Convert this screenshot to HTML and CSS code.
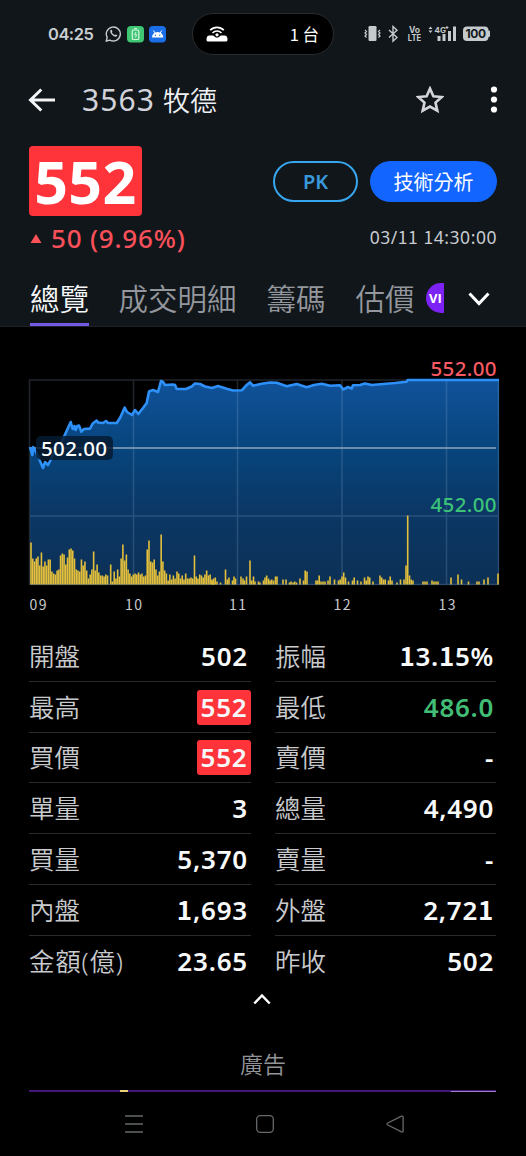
FILE: index.html
```html
<!DOCTYPE html>
<html lang="zh-Hant">
<head>
<meta charset="utf-8">
<title>3563 牧德</title>
<link rel="stylesheet" href="styles.css">
</head>
<body>
<div class="screen">
  <header class="top">
    <div class="status">
      <span class="clock">04:25</span>
      <svg class="notifs" width="62" height="18" viewBox="0 0 62 18">
        <path d="M1.2 16.2l1-3.8a7 7 0 1 1 2.7 2.7z" fill="none" stroke="#c9cdd0" stroke-width="1.4" stroke-linejoin="round"/>
        <path d="M5.7 5c.8-.6 1.2-.3 1.6 1 .3.8-.5.9-.3 1.5.6 1.3 1.400 2 2.700 2.600.6.200.8-.9 1.400-.7 1.300.6 1.500.8.9 1.700-1 1.300-3.400.4-5-1.300C5.400 8.200 4.600 6.200 5.700 5z" fill="#c9cdd0"/>
        <rect x="22" y="1" width="17" height="16.500" rx="4" fill="#3fc774"/>
        <rect x="27.300" y="5" width="6.500" height="9.500" rx="1" fill="none" stroke="#d8f6e3" stroke-width="1.200"/>
        <path d="M29 3.600h3M31 7l-1.500 2.800h2.200L30.300 12.500" fill="none" stroke="#d8f6e3"/>
        <rect x="44" y="1" width="17" height="16.500" rx="4" fill="#1a6fe8"/>
        <path d="M47 12.500a5.600 5.600 0 0 1 11.200 0z" fill="#fff"/>
        <path d="M48.500 5.500l1.500 2.500M56.700 5.500L55.200 8" stroke="#fff"/>
        <circle cx="50.400" cy="10.300" r=".7" fill="#1a6fe8"/><circle cx="54.800" cy="10.300" r=".7" fill="#1a6fe8"/>
      </svg>
      <div class="island">
        <svg width="22" height="18" viewBox="0 0 22 18">
          <path d="M4.200 5.200a9.500 9.500 0 0 1 13.600 0" fill="none" stroke="#fff" stroke-width="1.700"/>
          <path d="M6.500 8a6.200 6.200 0 0 1 9 0" fill="none" stroke="#fff" stroke-width="1.500"/>
          <circle cx="11" cy="9.800" r="1.600" fill="#fff"/>
          <path d="M.5 14.500C.5 12 1.500 10.500 3.500 10.500h3.300c1.200 0 1.700 2.200 4.200 2.200s3-2.200 4.200-2.200h3.300c2 0 3 1.500 3 4 0 1.500-.5 2-2 2h-17c-1.500 0-2-.5-2-2z" fill="#fff"/>
        </svg>
        <span>1 台</span>
      </div>
      <svg class="system" width="127" height="18" viewBox="0 0 127 18">
        <g fill="#c5cacd">
          <rect x="4.500" y="1" width="8" height="15" rx="1.200"/>
          <path d="M1 5l1.500 1.500L1 8l1.500 1.500L1 11l1.500 1.500M16 5l-1.500 1.500L16 8l-1.500 1.500L16 11l-1.500 1.500" fill="none" stroke="#c5cacd" stroke-width="1.200"/>
          <path d="M25 5l8 7.500-4 3.700V1.500l4 3.700-8 7.300" fill="none" stroke="#c5cacd" stroke-width="1.400"/>
          <text x="50.500" y="7.500" class="tiny" text-anchor="middle">Vo</text>
          <text x="50.500" y="16" class="tiny" text-anchor="middle" textLength="13.500" lengthAdjust="spacingAndGlyphs">LTE</text>
          <path d="M64.500 4l2-2.500 2 2.500zM64.500 5.500h4l-2 2.500z"/>
          <text x="70.500" y="7.500" class="four">4G</text>
          <path d="M83 1v3M81.500 2.500h3" stroke="#c5cacd"/>
          <path d="M73.500 11h3v5h-3zM78.500 9h3v7h-3zM84 6h3v10h-3zM89 1.500h3V16h-3z"/>
          <rect x="99" y="1.500" width="25.500" height="14.500" rx="4"/>
          <rect x="123.500" y="5.500" width="2.500" height="6.500" rx="1"/>
        </g>
        <text x="111.800" y="13.200" class="battery" text-anchor="middle" textLength="20.500">100</text>
      </svg>
    </div>

    <div class="titlebar">
      <svg width="28" height="24" viewBox="0 0 28 24"><path d="M27 12H3M13.300 1.500L2.500 12l10.800 10.500" fill="none" stroke="#f2f4f6" stroke-width="3"/></svg>
      <h1><span class="code">3563</span><span class="name">牧德</span></h1>
      <svg class="star" width="28" height="28" viewBox="0 0 28 28"><path d="M14 2.600l3.400 7.600 8.300.8-6.200 5.600 1.800 8.100L14 20.500l-7.300 4.200 1.800-8.100L2.300 11l8.300-.8z" fill="none" stroke="#d5d6da" stroke-width="2.600"/></svg>
      <svg class="more" width="8" height="28" viewBox="0 0 8 28" fill="#fff"><circle cx="4" cy="3.500" r="3.100"/><circle cx="4" cy="13.500" r="3.100"/><circle cx="4" cy="23.500" r="3.100"/></svg>
    </div>

    <div class="quote">
      <div class="price">552</div>
      <div class="actions"><span class="pk">PK</span><span class="ta">技術分析</span></div>
    </div>
    <div class="change">
      <svg width="12" height="10" viewBox="0 0 12 10"><path d="M6 1l5.500 9H.5z" fill="#fa5057"/></svg>
      <span class="delta">50 (9.96%)</span>
      <span class="time">03/<i>1</i><i>1</i> <i>1</i>4:30:00</span>
    </div>

    <nav class="tabs">
      <span class="tab active">總覽</span>
      <span class="tab">成交明細</span>
      <span class="tab">籌碼</span>
      <span class="tab">估價</span>
      <span class="vip">VI</span>
      <svg width="22" height="16" viewBox="0 0 22 16"><path d="M1.500 2.500L11 12.500l9.500-10" fill="none" stroke="#fff" stroke-width="3"/></svg>
    </nav>
  </header>

  <main>
    <svg class="chart" width="526" height="303" viewBox="0 327 526 303">
      <defs>
        <linearGradient id="area" x1="0" y1="380" x2="0" y2="585" gradientUnits="userSpaceOnUse">
          <stop offset="0" stop-color="#10529a"/><stop offset=".35" stop-color="#07447b"/><stop offset=".65" stop-color="#0b3765"/><stop offset="1" stop-color="#0c3055"/>
        </linearGradient>
      </defs>
      <path id="fill" fill="url(#area)"/>
      <g class="grid">
        <path d="M29.500 380V585M133.500 380V585M237.500 380V585M342 380V585M446.500 380V585M498.500 380V585M29 380H499M29 516H498M29 584.500H499"/>
      </g>
      <path d="M29 448H496" stroke="#8fa6bd" stroke-width="1.700"/>
      <g id="bars" fill="#e3bf3b"></g>
      <path id="line" fill="none" stroke="#2e90f9" stroke-width="2.600" stroke-linejoin="round"/>
      <rect x="36" y="436" width="77" height="24" rx="5" fill="#061b31" fill-opacity=".85"/>
      <text class="lvl" x="41" y="456" fill="#fff" textLength="66">502.00</text>
      <text class="lvl" x="430.500" y="375.500" fill="#fa5a64" textLength="66">552.00</text>
      <text class="lvl" x="430.500" y="512" fill="#3cc378" textLength="66">452.00</text>
      <g class="axis">
        <text x="29.500" y="610" textLength="17">09</text>
        <text x="125" y="610" textLength="17">10</text>
        <text x="229" y="610" textLength="17">11</text>
        <text x="333.500" y="610" textLength="17">12</text>
        <text x="438.500" y="610" textLength="17">13</text>
      </g>
    </svg>

    <section class="stats">
      <dl>
        <div><dt>開盤</dt><dd>502</dd></div>
        <div><dt>最高</dt><dd class="limit">552</dd></div>
        <div><dt>買價</dt><dd class="limit">552</dd></div>
        <div><dt>單量</dt><dd>3</dd></div>
        <div><dt>買量</dt><dd>5,370</dd></div>
        <div><dt>內盤</dt><dd><i>1</i>,693</dd></div>
        <div><dt class="unit">金額(億)</dt><dd>23.65</dd></div>
      </dl>
      <dl>
        <div><dt>振幅</dt><dd><i>1</i>3.<i>1</i>5%</dd></div>
        <div><dt>最低</dt><dd class="down">486.0</dd></div>
        <div><dt>賣價</dt><dd>-</dd></div>
        <div><dt>總量</dt><dd>4,490</dd></div>
        <div><dt>賣量</dt><dd>-</dd></div>
        <div><dt>外盤</dt><dd>2,72<i>1</i></dd></div>
        <div><dt>昨收</dt><dd>502</dd></div>
      </dl>
    </section>
    <svg class="collapse" width="18" height="12" viewBox="0 0 18 12"><path d="M1.300 10.500L9 2.500l7.700 8" fill="none" stroke="#fff" stroke-width="2.500"/></svg>
    <div class="ad-label">廣告</div>
    <div class="ad"><span class="spark"></span><span class="edge"></span></div>
  </main>

  <footer class="nav">
    <svg width="18" height="18" viewBox="0 0 18 18"><path d="M0 1h18M0 9h18M0 17h18"/></svg>
    <svg width="18" height="18" viewBox="0 0 18 18"><rect x=".7" y=".7" width="16.600" height="16.600" rx="3.500"/></svg>
    <svg width="18" height="18" viewBox="0 0 18 18"><path d="M15.500 1.200L1.800 8Q.2 9 1.800 10l13.700 6.900q1.600.5 1.600-1V2.200q0-1.500-1.600-1z"/></svg>
  </footer>
</div>
<script src="chart.js"></script>
</body>
</html>
```
FILE: chart.js
```js
// Intraday price, as x,y pairs in chart coordinates.
const price = '30,447 32.3,455 33.3,447 36,452 40,461 43,468 45,462 48,465 50.6,460 56,448 62,441 65.7,433 70.7,422 72.7,429 74.3,426 75.7,430 77.3,426 79,425.500 81.3,431.700 84,429 90,428.600 92.7,423.500 96.700,420.600 98,422.500 103,423 106,421 108,423 116.700,423 120,418 124.700,407.600 127,412 132,415 135,410 138.300,414 143,408 146.700,403 149,391.500 153,390 158,392 161,381 163,382 165,385 173,384.500 175,385 176.700,389 186,389 191.700,386.500 195,383.500 200,384 205,386.500 212,388 218,386 226.700,388.700 233,390.500 241.700,390.300 246.700,385 250,382.300 253,385.700 261.700,383.700 270,382.500 276.700,382.700 286.700,386.300 296.700,384 306.700,387.300 314,385 321.700,383.700 330,385.700 340,385.300 343.300,389.500 348,387 351.700,388.600 353,385.300 360,385 365,383.500 371.700,385 395,383 406.700,381.700 407.700,380 499,380';
document.getElementById('line').setAttribute('d', 'M' + price);
document.getElementById('fill').setAttribute('d', 'M' + price + ' 499,585 30,585Z');

// Volume: runs of one-minute bars, [x of the first bar, heights].
const step = 1.74;
const runs = [
  [31, [42,26,23,26,28,19,32,18,23,19,25,25,13,11,10,14,15,29,31,30,20,27,35,36,34,26,15,14,13,25,19,23,14,6,10,15,33,14,20,12,9,9,8,10,9]],
  [110.700, [20,3,13,6,15,8,26,40,24,30,15,11,8,10,11,10,12,10,11,8,9,35,44,23,22,25,15,9,13,50,23,14,11,4,10,5,9,6]],
  [177, [13,11,6,9,5,11,6,6]],
  [191, [7,6,29,8,6,10,9,7,10,14,9,10,5,6]]
];
const rest = [
  [212,3],[213.700,2],[215.300,7],[217,3],[220.500,2],[225.500,15],[227.300,5],[229,7],[232.500,4],[234,8],[235.500,6],
  [241,8],[243,6],[244.500,4],[246.500,8],[250,24],[251.700,4],[253.500,8],[255,3],[258.500,3],[260,2],[263.500,4],[265,7],[266.700,9],[268.500,6],[270,4],[271.700,5],[273.500,4],[275.500,8],[277,8],
  [283,5],[286,5],[289.500,2],[291,3],[293,2],[294.700,3],[296.500,2],[300,6],[303.500,4],[305.200,14],[307,13],[316,4],[317.500,4],[319.200,9],[321,3],[323,3],[325,3],[328,4],[330,8],[334.500,5],[338.500,4],[340.200,5],[342,8],[343.700,12],[345.500,7],[348.500,3],[352.500,4],[354.200,7],[357.500,4],[361,3],[364.500,7],[366.200,4],[368,8],[369.700,7],[373,3],[380,9],[381.700,7],[383.500,5],[385.200,5],[388.500,4],[390.200,8],[392,4],[397,2],[400.500,5],[404,5],[406,19],[407.700,69],[409.500,9],[411.200,5],[413,4],[423,3],[425,3],[427,3],[432,4],[434,3],[436,3],[438,3],[451,7],[458,10],[461.500,5],[468.500,3],[477,3],[479,3],[484,5],[488,7],[498,11]
];
const bars = runs.flatMap(([x, list]) => list.map((h, i) => [x + i * step, h])).concat(rest);
document.getElementById('bars').innerHTML = bars
  .map(([x, h]) => `<rect x="${(x - 0.8).toFixed(2)}" y="${584.5 - h}" width="1.600" height="${h}"/>`).join('');
```
FILE: styles.css
```css
* { box-sizing: border-box; }
body { margin: 0; background: #000; color: #fff; font-family: "Noto Sans", "Noto Sans CJK TC", sans-serif; }
.screen { width: 526px; height: 1156px; display: flex; flex-direction: column; overflow: hidden; }
svg { display: block; flex: none; }
i { font-style: normal; font-family: "Noto Sans CJK TC", sans-serif; line-height: 0; }

.top { height: 327px; background: #11161a; border-bottom: 1px solid #1e2125; }
.status { height: 68px; padding: 0 35px 0 48px; display: flex; align-items: center; }
.clock { width: 57px; font: 600 16.500px/20px Inter, sans-serif; color: #c9cdd0; letter-spacing: -.5px; }
.island { width: 142px; height: 42px; margin-left: 25px; padding: 0 14px 0 13px; display: flex; align-items: center; justify-content: space-between; border: 1.500px solid #292b2d; border-radius: 21px; background: #000; font: 400 16.500px/20px "Noto Sans CJK TC", sans-serif; }
.system { margin-left: auto; }
.tiny { font: 700 8.500px Inter, sans-serif; }
.four { font: 700 8px Inter, sans-serif; }
.battery { font: 700 12px Inter, sans-serif; fill: #11161a; }

.titlebar { height: 64px; padding: 0 28px; display: flex; align-items: center; }
h1 { margin: 0 auto 0 26px; display: flex; align-items: center; gap: 8px; font-weight: 400; line-height: 36px; }
.code { font-size: 30px; letter-spacing: 1.100px; color: #d2d3da; }
.name { font: 350 27px/36px "Noto Sans CJK TC", sans-serif; color: #eef0f4; }
.star { margin-right: 46px; }

.quote { height: 84px; padding: 14px 29px 0; display: flex; justify-content: space-between; }
.price { width: 113px; height: 70px; border-radius: 4px; background: #ff333a; font-size: 59px; font-weight: 700; line-height: 71px; text-align: center; letter-spacing: .5px; }
.actions { display: flex; gap: 12px; padding-top: 15px; }
.actions span { height: 41px; border-radius: 21px; display: flex; align-items: center; justify-content: center; font: 400 20px/24px "Noto Sans CJK TC", sans-serif; }
.actions .pk { width: 85px; border: 2.500px solid #37a6ef; color: #3999dc; font: 600 20px/24px "Noto Sans", sans-serif; }
.ta { width: 127px; background: #1266ff; }
.change { height: 44px; padding: 0 29px 0 30px; display: flex; align-items: center; }
.delta { margin-left: 9px; font-size: 26px; font-weight: 500; line-height: 34px; letter-spacing: .8px; color: #f9505a; }
.time { margin: -2px 0 0 auto; font-size: 17.500px; line-height: 24px; color: #c8cbcf; letter-spacing: .55px; white-space: nowrap; }

.tabs { height: 66px; padding: 0 36px 0 30px; display: flex; align-items: flex-start; }
.tab { height: 66px; margin-right: 30px; font: 350 29.500px/74px "Noto Sans CJK TC", sans-serif; color: #94979d; }
.tab.active { margin-right: 29.500px; color: #f4f6f8; border-bottom: 3px solid #7459e5; }
.tab:nth-child(4) { margin-right: 11.500px; }
.vip { width: 18px; height: 30px; margin-top: 23px; padding-left: 3px; border-radius: 15px 0 0 15px; background: #7d22f5; font: 700 13px/30px "Open Sans", sans-serif; }
.tabs svg { margin: 31px 0 0 auto; }

main { height: 765px; }
.grid path { fill: none; stroke: #a0c0dc; stroke-opacity: .2; stroke-width: 1.500; }
.lvl { font: 500 20.500px "Noto Sans", sans-serif; }
.axis { font: 400 14px "Noto Sans CJK TC", sans-serif; fill: #c9cbce; }

.stats { padding: 1px 30px 0 29px; display: grid; grid-template-columns: 222px 221px; justify-content: space-between; }
dl { margin: 0; }
dl div { height: 50.800px; display: flex; align-items: center; justify-content: space-between; border-bottom: 1px solid #292b2c; }
dl div:last-child { border-bottom: 0; }
dt { font: 350 25.500px/36px "Noto Sans", "Noto Sans CJK TC", sans-serif; color: #c8cacd; }
.unit { letter-spacing: .8px; }
dd { margin: 0; padding-right: 3px; font-size: 26px; font-weight: 600; line-height: 34px; letter-spacing: .8px; color: #f8f9fa; }
dl:last-child dd { padding-right: 2px; letter-spacing: .7px; }
dd.limit { width: 54px; height: 35px; margin-top: 1px; padding: 0; line-height: 35px; text-align: center; border-radius: 3px; background: #ff333a; }
dd.down { color: #41bd75; }
.collapse { margin: 6px auto 0 253px; }
.ad-label { margin-top: 42px; text-align: center; font: 350 23px/32px "Noto Sans CJK TC", sans-serif; color: #929497; }
.ad { height: 2px; margin: 11px 30px 0 29px; display: flex; background: #431579; }
.spark { width: 8px; height: 2px; margin-left: 91px; background: #e7d277; }
.edge { width: 45px; height: 1px; margin: 1px 0 0 auto; background: #9a80c8; }

.nav { height: 64px; padding: 0 122px 0 125px; display: flex; align-items: center; justify-content: space-between; }
.nav svg { fill: none; stroke: #66696b; stroke-width: 1.300; }
```
